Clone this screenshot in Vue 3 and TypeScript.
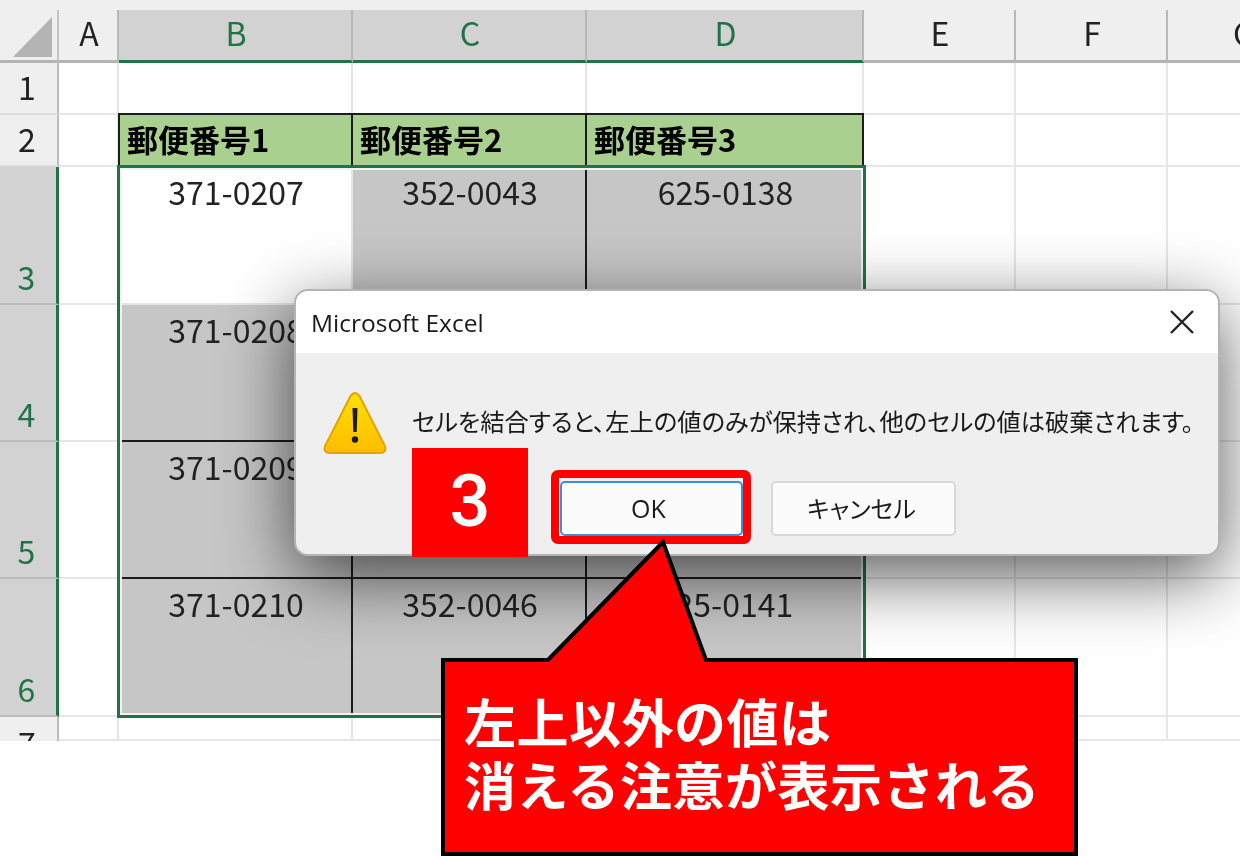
<script setup lang="ts">
// 列見出しと行データ
const columns = ["A", "B", "C", "D", "E", "F", "G"];

const rows = [
  { no: "1", cells: ["", "", ""] },
  { no: "2", cells: ["郵便番号1", "郵便番号2", "郵便番号3"] },
  { no: "3", cells: ["371-0207", "352-0043", "625-0138"] },
  { no: "4", cells: ["371-0208", "352-0044", "625-0139"] },
  { no: "5", cells: ["371-0209", "352-0045", "625-0140"] },
  { no: "6", cells: ["371-0210", "352-0046", "625-0141"] },
  { no: "7", cells: ["", "", ""] },
];

const isSelectedRow = (no: string) => ["3", "4", "5", "6"].includes(no);
const isSelectedCol = (col: string) => ["B", "C", "D"].includes(col);

// B3 だけ白（結合の起点セル）
const cellClass = (no: string, col: number) => ({
  title: no === "2",
  gray: isSelectedRow(no) && !(no === "3" && col === 0),
  first: col === 0,
  last: col === 2,
  lower: no === "6",
});
</script>

<template>
  <div class="page">
    <div class="sheet">
      <div class="strip"></div>

      <div class="corner">
        <svg width="58" height="52" viewBox="0 0 58 52">
          <polygon points="13,47 52,7 52,47" fill="#b4b4b4" />
        </svg>
      </div>
      <div
        v-for="col in columns"
        :key="col"
        class="col-head"
        :class="{ selected: isSelectedCol(col) }"
      >
        {{ col }}
      </div>

      <template v-for="row in rows" :key="row.no">
        <div
          class="row-head"
          :class="{ selected: isSelectedRow(row.no), cut: row.no === '7' }"
        >
          <span>{{ row.no }}</span>
        </div>
        <div class="cell"></div>
        <div
          v-for="(text, i) in row.cells"
          :key="i"
          class="cell"
          :class="cellClass(row.no, i)"
        >
          {{ text }}
        </div>
        <div class="cell"></div>
        <div class="cell"></div>
        <div class="cell"></div>
      </template>

      <div class="selection"></div>
    </div>

    <div class="dialog">
      <div class="dialog-title">
        <span>Microsoft Excel</span>
        <svg width="24" height="24" viewBox="0 0 24 24">
          <path d="M1 1 L23 23 M23 1 L1 23" stroke="#222" stroke-width="2.4" fill="none" />
        </svg>
      </div>
      <div class="dialog-body">
        <div class="message">
          <svg class="warn" width="64" height="64" viewBox="0 0 64 64">
            <defs>
              <linearGradient id="warnFill" x1="0" y1="0" x2="0" y2="1">
                <stop offset="0" stop-color="#ffe000" />
                <stop offset="1" stop-color="#ffbc00" />
              </linearGradient>
            </defs>
            <path
              d="M27.5 5 Q32 -1 36.500 5 L62 55 Q64 62 57 62 L7 62 Q0 62 2 55 Z"
              fill="url(#warnFill)"
              stroke="#e2a400"
              stroke-width="2"
            />
            <path d="M29.500 17 H34.500 L33.700 41 H30.300 Z" fill="#1c1c1c" />
            <circle cx="32" cy="48.500" r="3.200" fill="#1c1c1c" />
          </svg>
          <p>セルを結合すると、左上の値のみが保持され、他のセルの値は破棄されます。</p>
        </div>
        <div class="buttons">
          <button class="ok">OK</button>
          <button class="cancel">キャンセル</button>
        </div>
      </div>
    </div>

    <div class="step">3</div>
    <div class="ok-frame"></div>

    <div class="callout">
      <svg width="640" height="318" viewBox="0 0 640 318">
        <polygon
          points="3,122 108,122 223,4 266,122 636,122 636,316 3,316"
          fill="#ff0000"
          stroke="#000"
          stroke-width="4"
        />
      </svg>
      <p>左上以外の値は<br />消える注意が表示される</p>
    </div>
  </div>
</template>

<style scoped>
.page {
  position: relative;
  width: 1240px;
  height: 856px;
  overflow: hidden;
  background: #fff;
  font-family: "Noto Sans CJK JP", sans-serif;
  color: #222;
  filter: blur(0.4px);
}

.sheet {
  position: relative;
  display: grid;
  grid-template-columns: 59px 60px 234px 234px 277px 152px 152px 152px;
  grid-template-rows: 10px 53px 52px 52px 138px 137px 137px 138px 24px;
  width: 1240px;
  height: 741px;
  overflow: hidden;
  font-size: 32px;
}

.strip {
  grid-column: 1 / -1;
  background: #efefef;
}

.corner {
  background: #efefef;
  border-right: 2px solid #c4c4c4;
  border-bottom: 3px solid #b4b4b4;
  box-sizing: border-box;
}

.col-head {
  display: flex;
  align-items: center;
  justify-content: center;
  box-sizing: border-box;
  padding: 0 0 6px 2px;
  background: #efefef;
  border-right: 2px solid #b8b8b8;
  border-bottom: 3px solid #b4b4b4;
  line-height: 1;
}

.col-head.selected {
  background: #d2d2d2;
  border-bottom-color: #217346;
  color: #217346;
}

.row-head {
  display: flex;
  align-items: flex-end;
  justify-content: center;
  box-sizing: border-box;
  padding: 0 3px 8px 0;
  background: #efefef;
  border-right: 2px solid #bcbcbc;
  border-bottom: 2px solid #dcdcdc;
  line-height: 38px;
}

.row-head.selected {
  background: #d2d2d2;
  border-right: 3px solid #217346;
  border-bottom-color: #bcbcbc;
  color: #217346;
}

/* 7行目は下が切れて見える */
.row-head.cut {
  align-items: flex-start;
  padding: 6px 3px 0 0;
  border-bottom: none;
  overflow: hidden;
}

.cell {
  box-sizing: border-box;
  padding: 4px 0 0 2px;
  border-right: 2px solid #e6e6e6;
  border-bottom: 2px solid #e6e6e6;
  text-align: center;
  line-height: 40px;
  white-space: nowrap;
}

.cell.title {
  margin-top: -2px;
  padding: 4px 0 0 7px;
  background: #a9d08e;
  border-top: 2px solid #1c1c1c;
  border-right: 2px solid #1c1c1c;
  color: #000;
  font-size: 31px;
  font-weight: 700;
  text-align: left;
}

.cell.title.first {
  margin-left: -1px;
  border-left: 2px solid #1c1c1c;
}

.cell.gray {
  background: #c6c6c6;
  border-right: 2px solid #1c1c1c;
  border-bottom: 2px solid #1c1c1c;
}

.cell.gray.last {
  border-right-color: transparent;
}

.cell.gray.lower {
  border-bottom-color: transparent;
}

/* グリッド領域を基準に選択枠を重ねる */
.selection {
  position: absolute;
  grid-column: 3 / 6;
  grid-row: 5 / 9;
  inset: -2px -2px -1px -2px;
  border: 3px solid #217346;
  box-shadow: inset 0 0 0 2px #f2f2f2;
  pointer-events: none;
}

.dialog {
  position: absolute;
  left: 294px;
  top: 289px;
  box-sizing: border-box;
  width: 926px;
  height: 267px;
  overflow: hidden;
  border: 2px solid #b4b4b4;
  border-radius: 14px;
  background: #efefef;
  box-shadow: 0 20px 70px rgba(0, 0, 0, 0.65);
}

.dialog-title {
  display: flex;
  align-items: center;
  justify-content: space-between;
  height: 62px;
  padding: 0 24px 0 15px;
  background: #fff;
  font-family: "Open Sans", sans-serif;
  font-size: 24.5px;
  color: #1a1a1a;
}

.dialog-body {
  display: flex;
  flex-direction: column;
}

.message {
  display: flex;
  align-items: flex-start;
  padding: 38px 0 0 27px;
}

.warn {
  flex: none;
}

.message p {
  margin: 13px 0 0 25px;
  font-size: 24.3px;
  font-feature-settings: "palt";
  line-height: 34px;
  white-space: nowrap;
  color: #1a1a1a;
}

.buttons {
  display: flex;
  gap: 28px;
  padding: 26px 0 0 264px;
}

button {
  box-sizing: border-box;
  height: 55px;
  background: #fbfbfb;
  border-radius: 5px;
  color: #1a1a1a;
  font-size: 25px;
  padding: 0;
}

.ok {
  width: 183px;
  border: 2px solid #3c8fd6;
  font-family: "Open Sans", sans-serif;
  padding: 0 6px 2px 0;
}

.cancel {
  width: 185px;
  border: 2px solid #d8d8d8;
  font-family: "Noto Sans CJK JP", sans-serif;
  font-size: 24px;
  font-feature-settings: "palt";
  padding: 0 4px 2px 0;
}

.step {
  position: absolute;
  left: 412px;
  top: 448px;
  display: flex;
  align-items: center;
  justify-content: center;
  width: 116px;
  height: 109px;
  padding-bottom: 2px;
  box-sizing: border-box;
  background: #ff0000;
  color: #fff;
  font-family: Roboto, sans-serif;
  font-size: 72px;
  font-weight: 500;
}

.ok-frame {
  position: absolute;
  left: 551px;
  top: 470px;
  box-sizing: border-box;
  width: 200px;
  height: 74px;
  border: 8px solid #ff0000;
  border-radius: 7px;
}

.callout {
  position: absolute;
  left: 440px;
  top: 538px;
  width: 640px;
  height: 318px;
}

.callout p {
  position: absolute;
  left: 24px;
  top: 151px;
  margin: 0;
  color: #fff;
  font-size: 52px;
  font-weight: 700;
  letter-spacing: 0.5px;
  line-height: 63px;
  white-space: nowrap;
}
</style>

<style>
body {
  margin: 0;
  background: #fff;
}
</style>
